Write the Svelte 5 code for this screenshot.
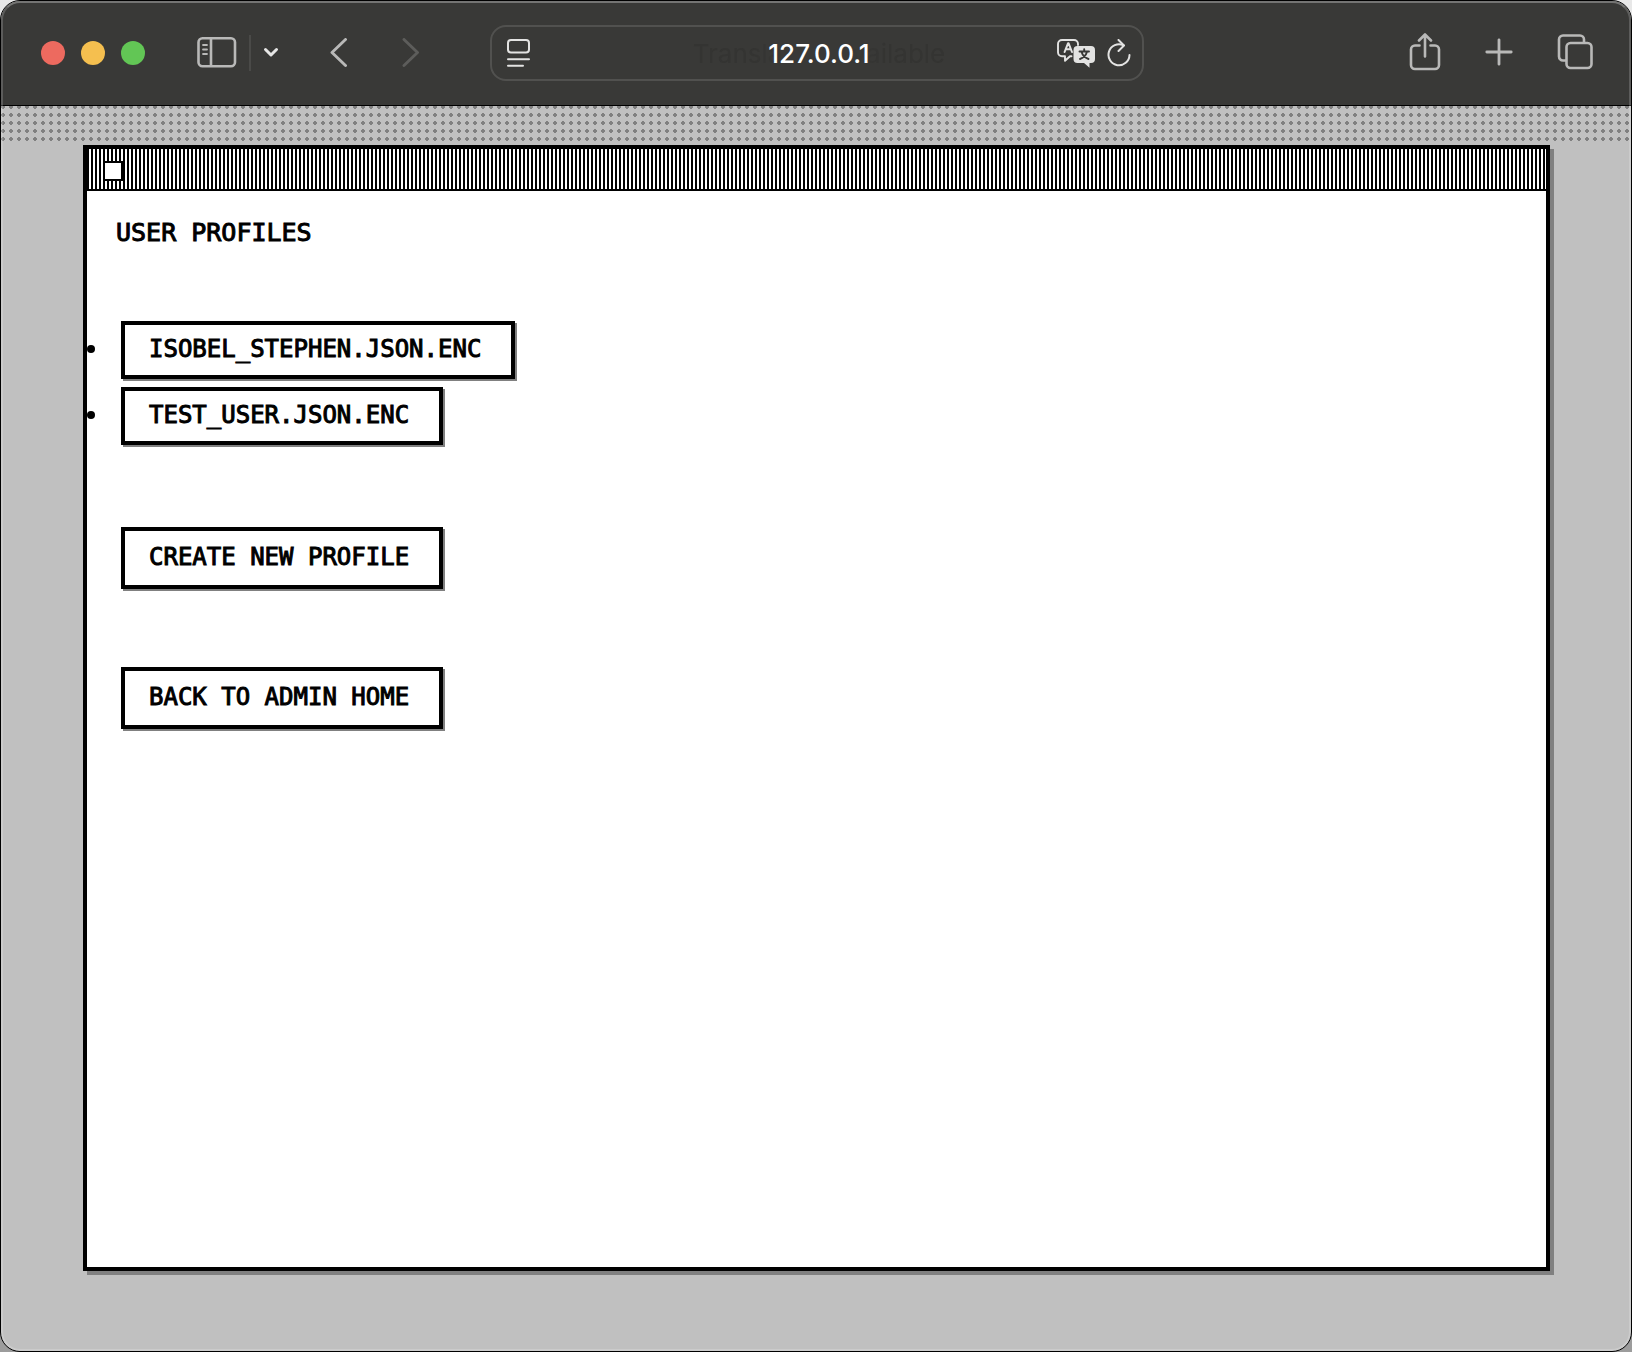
<script>
  const profiles = ['ISOBEL_STEPHEN.JSON.ENC', 'TEST_USER.JSON.ENC'];
  let address = $state('127.0.0.1');
</script>

<div class="browser">
  <header class="toolbar">
    <div class="side">
      <div class="lights">
        <button class="light red" aria-label="Close"></button>
        <button class="light yellow" aria-label="Minimize"></button>
        <button class="light green" aria-label="Zoom"></button>
      </div>
      <button class="icon sidebar" aria-label="Show sidebar">
        <svg width="40" height="32" viewBox="0 0 40 32" fill="none" stroke="currentColor" stroke-width="2.6">
          <rect x="1.5" y="1.300" width="36.5" height="28" rx="4" />
          <path d="M14 1.300v28" />
          <path d="M6 8h4M6 12.500h4M6 17h4" stroke-width="1.8" stroke-linecap="round" />
        </svg>
      </button>
      <span class="divider"></span>
      <button class="icon menu" aria-label="Tab groups">
        <svg width="16" height="12" viewBox="0 0 16 12" fill="none" stroke="currentColor" stroke-width="3" stroke-linecap="round" stroke-linejoin="round">
          <path d="M2.5 2.500l5.500 5.500L13.500 2.500" />
        </svg>
      </button>
      <button class="icon back" aria-label="Back">
        <svg width="20" height="30" viewBox="0 0 20 30" fill="none" stroke="currentColor" stroke-width="2.9" stroke-linecap="round" stroke-linejoin="round">
          <path d="M16.500 1.500L3 14.500l13.500 13" />
        </svg>
      </button>
      <button class="icon forward" aria-label="Forward" disabled>
        <svg width="20" height="30" viewBox="0 0 20 30" fill="none" stroke="currentColor" stroke-width="2.9" stroke-linecap="round" stroke-linejoin="round">
          <path d="M3 1.500L16.500 14.500L3 27.500" />
        </svg>
      </button>
    </div>

    <div class="address">
      <button class="icon bright" aria-label="Page menu">
        <svg width="24" height="28" viewBox="0 0 24 28" fill="none" stroke="currentColor" stroke-width="2" stroke-linecap="round">
          <rect x="1" y="1" width="21" height="12.500" rx="3" />
          <path d="M1 20.200h21M1 26.700h15" />
        </svg>
      </button>
      <div class="field">
        <span class="notice" aria-hidden="true">Translation Available</span>
        <input type="text" aria-label="Address" bind:value={address} />
      </div>
      <button class="icon bright" aria-label="Translate">
        <svg width="38" height="29" viewBox="0 0 38 29" fill="none" stroke="currentColor" stroke-linecap="round" stroke-linejoin="round">
          <path d="M14.500 17.200h-1.500l-5 4.600v-4.600H5a4 4 0 0 1-4-4V5a4 4 0 0 1 4-4h12a4 4 0 0 1 4 4v1" stroke-width="1.900" />
          <path d="M7.600 13L11 4.300h.6L15 13M8.800 10.300h5" stroke-width="2" />
          <path d="M20.500 7H34a4 4 0 0 1 4 4v9a4 4 0 0 1-4 4h-1.500v4.800L27 24h-6.500a4 4 0 0 1-4-4v-9a4 4 0 0 1 4-4z" fill="currentColor" stroke="none" />
          <path d="M22.500 12.500h9.500M27.200 10.300v2M30 12.800c-1 3.500-3.500 6-7 7.200M24.500 12.800c1 3.500 3.500 6 7 7.200" stroke="#393937" stroke-width="1.900" />
        </svg>
      </button>
      <button class="icon bright reload" aria-label="Reload">
        <svg width="24" height="28" viewBox="0 0 24 28" fill="none" stroke="currentColor" stroke-width="2" stroke-linecap="round" stroke-linejoin="round">
          <path d="M16.500 6.300A10.500 10.500 0 1 0 22.500 16" />
          <path d="M11.500 1L17 6.500L11.500 12" />
        </svg>
      </button>
    </div>

    <div class="side end">
      <button class="icon" aria-label="Share">
        <svg width="32" height="38" viewBox="0 0 32 38" fill="none" stroke="currentColor" stroke-width="2.600" stroke-linecap="round" stroke-linejoin="round">
          <path d="M10.500 12.500H6A4 4 0 0 0 2 16.500V32a4 4 0 0 0 4 4h20a4 4 0 0 0 4-4V16.500a4 4 0 0 0-4-4h-4.500" />
          <path d="M16 23.500V2M10 7.500L16 1.500l6 6" />
        </svg>
      </button>
      <button class="icon" aria-label="New tab">
        <svg width="28" height="28" viewBox="0 0 28 28" fill="none" stroke="currentColor" stroke-width="2.800" stroke-linecap="round">
          <path d="M14 1.800v24.400M1.800 14h24.400" />
        </svg>
      </button>
      <button class="icon" aria-label="Show all tabs">
        <svg width="36" height="36" viewBox="0 0 36 36" fill="none" stroke="currentColor" stroke-width="2.600">
          <rect x="9.500" y="9" width="25" height="25" rx="4" />
          <path d="M9.500 26.500H6a4 4 0 0 1-4-4V5.500a4 4 0 0 1 4-4h17a4 4 0 0 1 4 4V9" />
        </svg>
      </button>
    </div>
  </header>

  <div class="dots"></div>

  <main class="window">
    <div class="titlebar">
      <button class="close" aria-label="Close window"></button>
    </div>
    <h1>USER PROFILES</h1>
    <ul>
      {#each profiles as profile}
        <li><a class="btn" href="#{profile}">{profile}</a></li>
      {/each}
    </ul>
    <div class="actions">
      <button class="btn tall">CREATE NEW PROFILE</button>
      <a class="btn tall" href="#admin">BACK TO ADMIN HOME</a>
    </div>
  </main>
  <div class="frame"></div>
</div>

<style>
  :global(body) {
    margin: 0;
    background: linear-gradient(#e8e8e8, #9c9c9c);
  }

  * {
    box-sizing: border-box;
  }

  button {
    padding: 0;
    border: 0;
    background: none;
    cursor: pointer;
  }

  svg {
    display: block;
  }

  .browser {
    position: relative;
    display: flex;
    flex-direction: column;
    min-height: 100vh;
    border: 1px solid #000;
    border-radius: 20px;
    overflow: hidden;
    background: #c0c0c0;
  }

  /* Light rim drawn just inside the browser's edge */
  .frame {
    position: absolute;
    inset: 0;
    border: 2px solid rgba(255, 255, 255, 0.18);
    border-top-color: rgba(255, 255, 255, 0.3);
    border-radius: 19px;
    pointer-events: none;
  }

  .toolbar {
    display: grid;
    grid-template-columns: 1fr minmax(0, 654px) 1fr;
    align-items: center;
    height: 105px;
    padding: 0 38px 0 40px;
    border-bottom: 1px solid #000;
    background: #393937;
    color: #b9b9b8;
  }

  .side {
    display: flex;
    align-items: center;
  }

  .end {
    justify-content: flex-end;
    gap: 44px;
    padding-bottom: 2px;
  }

  .lights {
    display: flex;
    gap: 16px;
  }

  .light {
    width: 24px;
    height: 24px;
    border-radius: 50%;
  }

  .red {
    background: #ed6a5f;
  }

  .yellow {
    background: #f5bf4f;
  }

  .green {
    background: #62c655;
  }

  .icon {
    flex: none;
    color: inherit;
  }

  .sidebar {
    margin-left: 52px;
  }

  .divider {
    width: 2px;
    height: 36px;
    margin: 0 12px;
    background: #4a4a48;
  }

  .menu {
    color: #e6e6e5;
  }

  .back {
    margin-left: 50px;
  }

  .forward {
    margin-left: 52px;
    color: #5d5d5b;
  }

  .address {
    display: flex;
    align-items: center;
    height: 56px;
    padding: 0 11px 0 15px;
    border: 2px solid #51514f;
    border-radius: 16px;
  }

  .bright {
    color: #e3e3e2;
  }

  .reload {
    margin-left: 12px;
  }

  .field {
    position: relative;
    flex: 1;
    min-width: 0;
    padding: 2px 0 0 50px;
    font: 500 26px/32px Inter, sans-serif;
    text-align: center;
  }

  .notice {
    position: absolute;
    inset: 2px 0 0 50px;
    color: #343432;
    font-weight: 400;
    -webkit-mask-image: linear-gradient(90deg, #000 36%, transparent 44%, transparent 56%, #000 64%);
    mask-image: linear-gradient(90deg, #000 36%, transparent 44%, transparent 56%, #000 64%);
  }

  input {
    position: relative;
    display: block;
    width: 100%;
    height: 32px;
    padding: 0;
    border: 0;
    outline: 0;
    background: transparent;
    color: #fff;
    font: inherit;
    text-align: center;
  }

  .dots {
    height: 36px;
    background: radial-gradient(circle at center, #808080 2px, transparent 2px) -2px -3px / 8px 8px;
  }

  .window {
    flex: 1;
    margin: 3px 81px 80px 82px;
    border: 4px solid #000;
    background: #fff;
    box-shadow: 4px 4px 0 #808080;
    color: #000;
    font-family: "DejaVu Sans Mono", monospace;
    -webkit-text-stroke: 1px #000;
  }

  .titlebar {
    height: 42px;
    padding: 12px 16px;
    border-bottom: 2px solid #000;
    background: repeating-linear-gradient(90deg, #000 0 2px, #fff 2px 4px);
  }

  .close {
    display: block;
    width: 20px;
    height: 20px;
    border: 2px solid #000;
    background: #fff;
  }

  h1 {
    margin: 25px 29px 71px;
    font-size: 25px;
    font-weight: 400;
    line-height: 34px;
  }

  ul {
    display: flex;
    flex-direction: column;
    gap: 8px;
    margin: 0;
    padding: 0;
    list-style: none;
  }

  li {
    display: flex;
    align-items: center;
    gap: 26px;
  }

  li::before {
    content: "";
    width: 8px;
    height: 8px;
    margin-bottom: 2px;
    border-radius: 50%;
    background: #000;
  }

  .actions {
    display: flex;
    flex-direction: column;
    align-items: flex-start;
    gap: 78px;
    padding: 82px 34px;
  }

  .btn {
    padding: 9px 30px 11px 24px;
    border: 4px solid #000;
    background: #fff;
    box-shadow: 2px 2px 0 #808080;
    color: #000;
    font: 400 24px/30px "DejaVu Sans Mono", monospace;
    text-decoration: none;
    -webkit-text-stroke: 1px #000;
  }

  .tall {
    padding-top: 11px;
    padding-bottom: 13px;
  }
</style>
